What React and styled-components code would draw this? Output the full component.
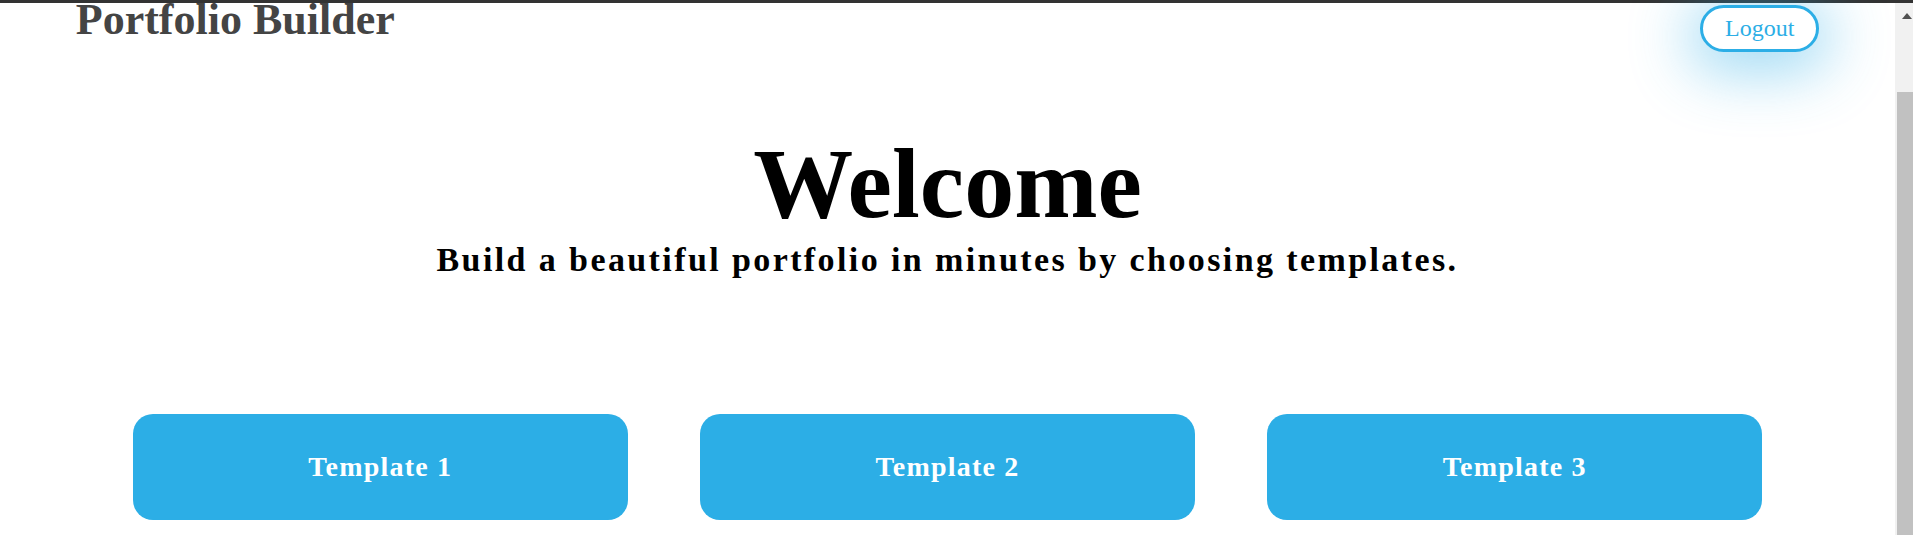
import React from 'react';
import styled, { createGlobalStyle } from 'styled-components';

const GlobalStyle = createGlobalStyle`
  html, body {
    margin: 0;
    padding: 0;
    background: #ffffff;
    overflow: hidden;
  }

  body {
    font-family: "Liberation Serif", "Times New Roman", serif;
  }
`;

const Window = styled.div`
  display: flex;
  flex-direction: column;
  width: 1913px;
  height: 535px;
  overflow: hidden;
`;

const TopEdge = styled.div`
  height: 3px;
  flex-shrink: 0;
  background: #333333;
`;

const Viewport = styled.div`
  display: flex;
  flex: 1;
  min-height: 0;
`;

const Page = styled.main`
  flex: 1;
  display: flex;
  flex-direction: column;
  min-width: 0;
`;

const Header = styled.header`
  display: flex;
  justify-content: space-between;
  align-items: flex-start;
  padding: 0 4%;
`;

const Brand = styled.h1`
  margin: 0;
  font-size: 44px;
  line-height: 34px;
  font-weight: 700;
  color: #444444;
`;

const LogoutButton = styled.button`
  margin-top: 2px;
  width: 119px;
  height: 47px;
  border: 3px solid #2caee6;
  border-radius: 30px;
  background: #ffffff;
  color: #2caee6;
  font-family: inherit;
  font-size: 24px;
  cursor: pointer;
  box-shadow: 0 8px 60px 12px rgba(44, 174, 230, 0.45);
`;

const Hero = styled.section`
  margin-top: 82px;
  display: flex;
  flex-direction: column;
  align-items: center;
  text-align: center;
`;

const Welcome = styled.h2`
  margin: 0;
  font-size: 100px;
  line-height: 100px;
  font-weight: 700;
  color: #000000;
`;

const Tagline = styled.p`
  margin: 6px 0 0;
  font-size: 34px;
  line-height: 40px;
  font-weight: 700;
  letter-spacing: 2.4px;
  color: #000000;
`;

const TemplateGrid = styled.section`
  margin-top: 134px;
  padding: 0 7%;
  display: grid;
  grid-template-columns: repeat(3, 1fr);
  gap: 72px;
`;

const TemplateButton = styled.button`
  height: 106px;
  border: none;
  border-radius: 20px;
  background: #2caee6;
  color: #ffffff;
  font-family: inherit;
  font-size: 28px;
  font-weight: 700;
  letter-spacing: 1.2px;
  cursor: pointer;
`;

const ScrollTrack = styled.div`
  width: 18px;
  flex-shrink: 0;
  display: flex;
  flex-direction: column;
  background: #f1f1f1;
`;

const ScrollArrow = styled.div`
  height: 89px;
  display: flex;
  justify-content: flex-end;
  padding: 10px 1px 0 0;
  box-sizing: border-box;

  &::before {
    content: '';
    width: 0;
    height: 0;
    border-left: 5px solid transparent;
    border-right: 5px solid transparent;
    border-bottom: 6px solid #505050;
  }
`;

const ScrollThumb = styled.div`
  flex: 1;
  margin-left: 2px;
  background: #c1c1c1;
`;

const templates = ['Template 1', 'Template 2', 'Template 3'];

function App() {
  return (
    <>
      <GlobalStyle />
      <Window>
        <TopEdge />
        <Viewport>
          <Page>
            <Header>
              <Brand>Portfolio Builder</Brand>
              <LogoutButton>Logout</LogoutButton>
            </Header>

            <Hero>
              <Welcome>Welcome</Welcome>
              <Tagline>Build a beautiful portfolio in minutes by choosing templates.</Tagline>
            </Hero>

            <TemplateGrid>
              {templates.map((name) => (
                <TemplateButton key={name}>{name}</TemplateButton>
              ))}
            </TemplateGrid>
          </Page>

          <ScrollTrack>
            <ScrollArrow />
            <ScrollThumb />
          </ScrollTrack>
        </Viewport>
      </Window>
    </>
  );
}

export default App;
